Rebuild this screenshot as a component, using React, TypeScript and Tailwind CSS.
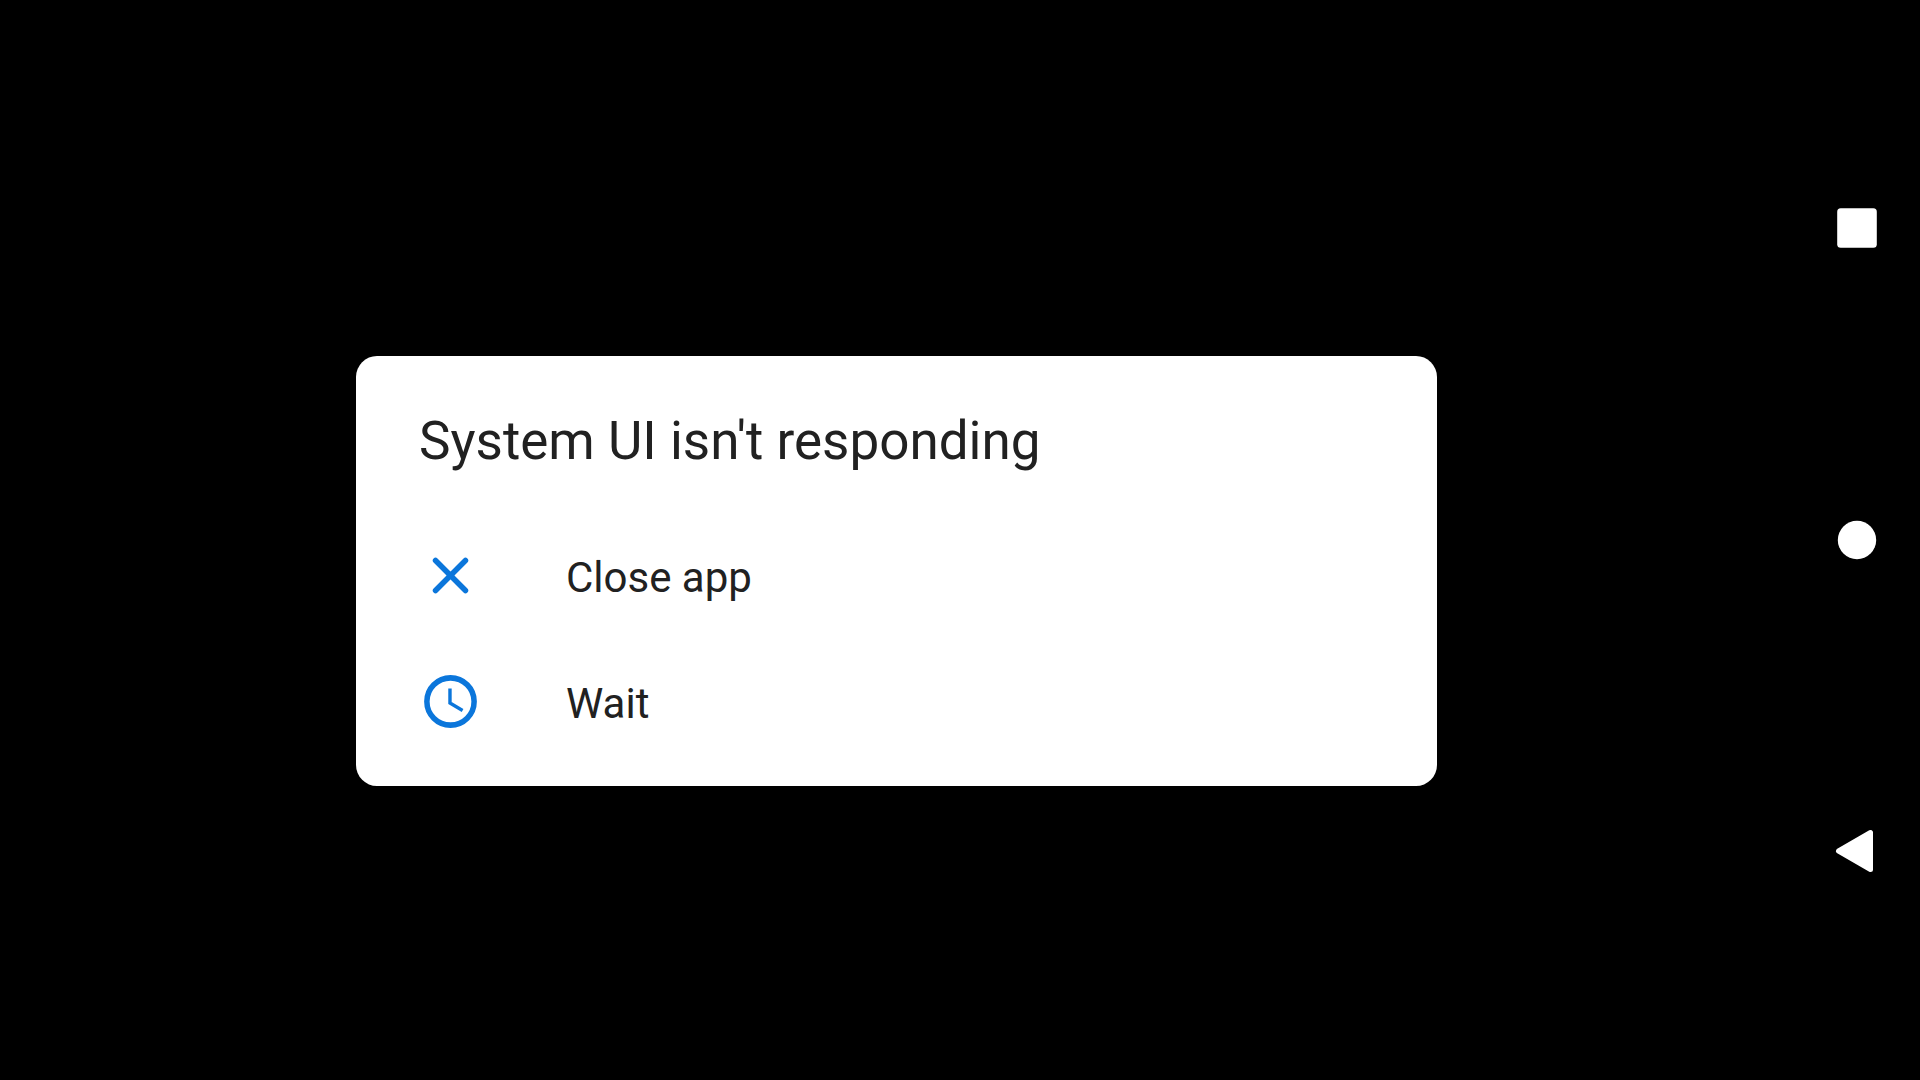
import React from "react";

interface ActionProps {
  label: string;
  children: React.ReactNode;
}

const CloseIcon = () => (
  <svg className="w-[63px] h-[63px]" viewBox="0 0 24 24" fill="none" aria-hidden="true">
    <path d="M6.3 6.3 17.7 17.7M17.7 6.3 6.3 17.7" stroke="currentColor" strokeWidth="2.1" strokeLinecap="round" />
  </svg>
);

const ClockIcon = () => (
  <svg className="w-[63px] h-[63px]" viewBox="0 0 24 24" fill="none" aria-hidden="true">
    <circle cx="12" cy="12" r="9" stroke="currentColor" strokeWidth="2.1" />
    <path d="M11.8 7v5.6l4.8 2.8" stroke="currentColor" strokeWidth="1.3" />
  </svg>
);

const Action = ({ label, children }: ActionProps) => (
  <button
    type="button"
    className="flex items-center w-full min-h-[126px] px-[63px] gap-[84px] text-left active:bg-gray-100"
  >
    <span className="shrink-0 text-[#0b76db]">{children}</span>
    <span className="text-[42px] leading-[50px] pt-1.5">{label}</span>
  </button>
);

const App = () => {
  return (
    <div className="flex min-h-screen bg-black font-[Roboto,sans-serif] text-[#212121]">
      <main className="flex flex-1 items-center justify-center pt-[62px]">
        <div
          role="alertdialog"
          aria-labelledby="title"
          className="w-full max-w-[1081px] rounded-[21px] bg-white pt-[54px] pb-[22px]"
        >
          <h1 id="title" className="px-[63px] pb-[39px] text-[53px] leading-[63px] font-normal">
            System UI isn't responding
          </h1>
          <Action label="Close app">
            <CloseIcon />
          </Action>
          <Action label="Wait">
            <ClockIcon />
          </Action>
        </div>
      </main>

      {/* navigation bar */}
      <nav className="flex flex-col items-center justify-center gap-[249px] w-[127px] pb-px shrink-0">
        <button type="button" aria-label="Overview">
          <svg className="w-[63px] h-[63px]" viewBox="0 0 63 63" fill="white">
            <rect x="12.2" y="12.2" width="39.6" height="39.6" rx="3.5" />
          </svg>
        </button>
        <button type="button" aria-label="Home">
          <svg className="w-[63px] h-[63px]" viewBox="0 0 63 63" fill="white">
            <circle cx="32" cy="32" r="19.2" />
          </svg>
        </button>
        <button type="button" aria-label="Back">
          <svg className="w-[63px] h-[63px]" viewBox="0 0 63 63" fill="white">
            <path
              d="M13.5 31 45.5 12.5v37z"
              stroke="white"
              strokeWidth="5"
              strokeLinejoin="round"
            />
          </svg>
        </button>
      </nav>
    </div>
  );
};

export default App;
